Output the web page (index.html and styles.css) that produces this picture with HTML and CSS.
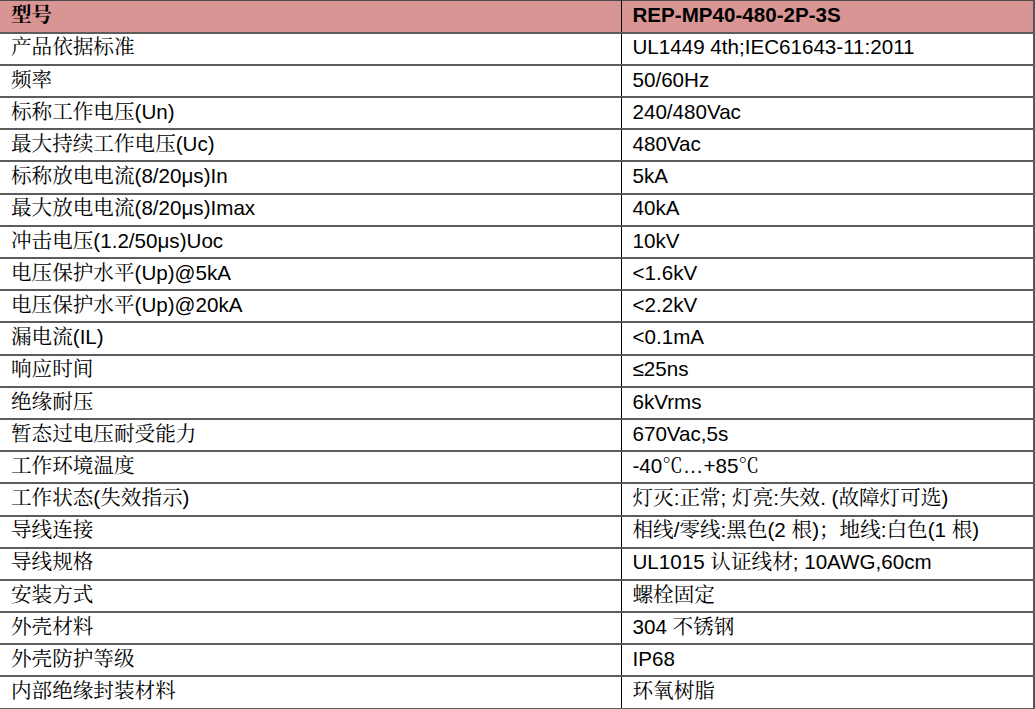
FILE: index.html
```html
<!DOCTYPE html>
<html lang="zh-CN">
<head>
<meta charset="utf-8">
<title>REP-MP40-480-2P-3S</title>
<link rel="stylesheet" href="styles.css">
</head>
<body>
<table class="spec">
  <thead>
    <tr class="head"><th class="k">型号</th><th class="v">REP-MP40-480-2P-3S</th></tr>
  </thead>
  <tbody>
    <tr><td class="k">产品依据标准</td><td class="v">UL1449 4th;IEC61643-11:2011</td></tr>
    <tr><td class="k">频率</td><td class="v">50/60Hz</td></tr>
    <tr><td class="k">标称工作电压(Un)</td><td class="v">240/480Vac</td></tr>
    <tr><td class="k">最大持续工作电压(Uc)</td><td class="v">480Vac</td></tr>
    <tr><td class="k">标称放电电流(8/20μs)In</td><td class="v">5kA</td></tr>
    <tr><td class="k">最大放电电流(8/20μs)Imax</td><td class="v">40kA</td></tr>
    <tr><td class="k">冲击电压(1.2/50μs)Uoc</td><td class="v">10kV</td></tr>
    <tr><td class="k">电压保护水平(Up)@5kA</td><td class="v">&lt;1.6kV</td></tr>
    <tr><td class="k">电压保护水平(Up)@20kA</td><td class="v">&lt;2.2kV</td></tr>
    <tr><td class="k">漏电流(IL)</td><td class="v">&lt;0.1mA</td></tr>
    <tr><td class="k">响应时间</td><td class="v">≤25ns</td></tr>
    <tr><td class="k">绝缘耐压</td><td class="v">6kVrms</td></tr>
    <tr><td class="k">暂态过电压耐受能力</td><td class="v">670Vac,5s</td></tr>
    <tr><td class="k">工作环境温度</td><td class="v">-40℃…+85℃</td></tr>
    <tr><td class="k">工作状态(失效指示)</td><td class="v">灯灭:正常; 灯亮:失效. (故障灯可选)</td></tr>
    <tr><td class="k">导线连接</td><td class="v">相线/零线:黑色(2 根)；地线:白色(1 根)</td></tr>
    <tr><td class="k">导线规格</td><td class="v">UL1015 认证线材; 10AWG,60cm</td></tr>
    <tr><td class="k">安装方式</td><td class="v">螺栓固定</td></tr>
    <tr><td class="k">外壳材料</td><td class="v">304 不锈钢</td></tr>
    <tr><td class="k">外壳防护等级</td><td class="v">IP68</td></tr>
    <tr><td class="k">内部绝缘封装材料</td><td class="v">环氧树脂</td></tr>
  </tbody>
</table>
</body>
</html>
```

FILE: styles.css
```css
html, body {
  margin: 0;
  padding: 0;
  background: #ffffff;
}

.spec {
  width: 1035px;
  border-collapse: collapse;
  table-layout: fixed;
  font-family: "Liberation Sans", "Noto Serif CJK SC", "Noto Sans CJK SC", sans-serif;
  font-size: 20.6px;
  color: #000;
  border-top: 1px solid #4a4a4a;
  border-right: 2px solid #555;
}

.spec tr {
  height: 32.2px;
  border-bottom: 2px solid #5c5c5c;
}

.spec th,
.spec td {
  height: 32.2px;
  box-sizing: border-box;
  padding: 0 11px 2px 11px;
  text-align: left;
  vertical-align: middle;
  white-space: nowrap;
  line-height: 1;
}

.spec .k {
  width: 621px;
  border-right: 1px solid #000;
}

.head {
  background: #d99594;
}

.head th {
  font-weight: bold;
}
```
